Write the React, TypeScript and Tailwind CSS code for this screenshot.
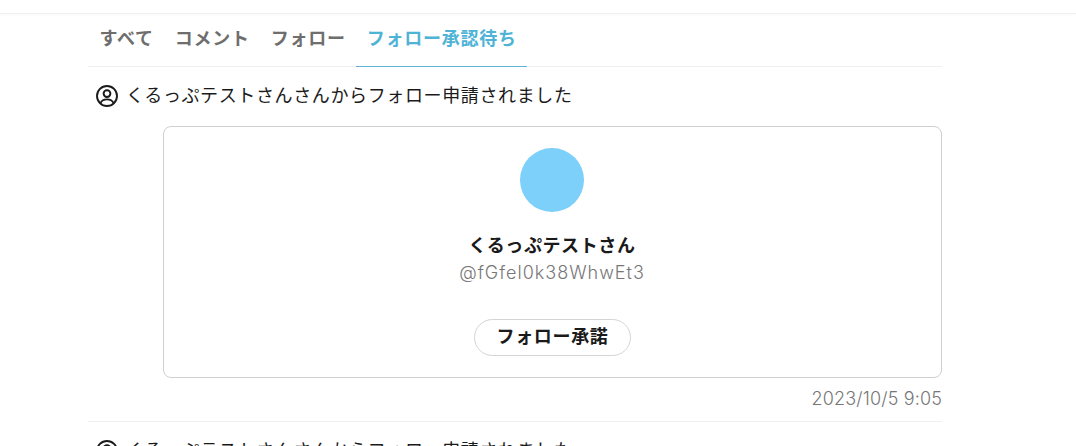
const font = "font-['Liberation_Sans','Noto_Sans_CJK_JP',sans-serif]";

function PersonIcon() {
  return (
    <svg width="24" height="24" viewBox="0 0 24 24" fill="none" stroke="#1a1a1a" strokeWidth="1.9" className="shrink-0">
      <circle cx="12" cy="12" r="10" />
      <circle cx="12" cy="9.6" r="3.4" />
      <path d="M5.4 19.2c1.2-2.6 3.6-3.8 6.6-3.8s5.4 1.2 6.6 3.8" />
    </svg>
  );
}

function Tab({ label, active }: { label: string; active?: boolean }) {
  return (
    <div
      className={
        "h-[53px] px-[10.5px] pb-[2px] flex items-center text-[18px] font-bold tracking-[0.75px] -mb-px " +
        (active ? "text-[#4fb3d6] border-b border-[#5bb4d6]" : "text-[#6e6e6e]")
      }
    >
      {label}
    </div>
  );
}

function Notice() {
  return (
    <div className="flex items-center gap-[7px] h-[24px] pl-[7px] text-[18px] text-[#1a1a1a] tracking-[0.62px]">
      <PersonIcon />
      <span className="whitespace-nowrap">くるっぷテストさんさんからフォロー申請されました</span>
    </div>
  );
}

export default function App() {
  return (
    <div className={"w-[1076px] h-[446px] overflow-hidden bg-white " + font}>
      <div className="h-[14px] bg-white border-b border-[#f1f1f1] shadow-[0_1px_3px_rgba(0,0,0,0.03)]" />
      <div className="w-[854px] ml-[88px]">
        <div className="flex h-[53px] pl-[1px] border-b border-[#f0f0f0]">
          <Tab label="すべて" />
          <Tab label="コメント" />
          <Tab label="フォロー" />
          <Tab label="フォロー承認待ち" active />
        </div>
        <div className="pt-[17px]">
          <Notice />
          <div className="ml-[75px] mt-[18px] h-[252px] border border-[#cfcfcf] rounded-[8px] flex flex-col items-center pt-[21px] pr-[1px]">
            <div className="w-[64px] h-[64px] rounded-full bg-[#7dd0fa]" />
            <div className="mt-[21px] text-[18px] leading-[27px] font-bold text-[#1a1a1a] tracking-[0.6px]">くるっぷテストさん</div>
            <div className="-mt-[1px] font-['Inter'] font-light text-[18px] leading-[27px] text-[#777777] tracking-[1px]">@fGfel0k38WhwEt3</div>
            <div className="mt-[33px] ml-[1px] w-[157px] h-[37px] rounded-full border border-[#d4d4d4] flex items-center justify-center text-[18px] font-bold text-[#1a1a1a] tracking-[0.65px]">
              フォロー承諾
            </div>
          </div>
          <div className="mt-[9px] text-right font-['Inter'] font-light text-[18px] leading-[24px] text-[#777777] tracking-[0.15px]">2023/10/5 9:05</div>
        </div>
        <div className="mt-[10px] border-t border-[#f0f0f0] pt-[17px]">
          <Notice />
        </div>
      </div>
    </div>
  );
}
